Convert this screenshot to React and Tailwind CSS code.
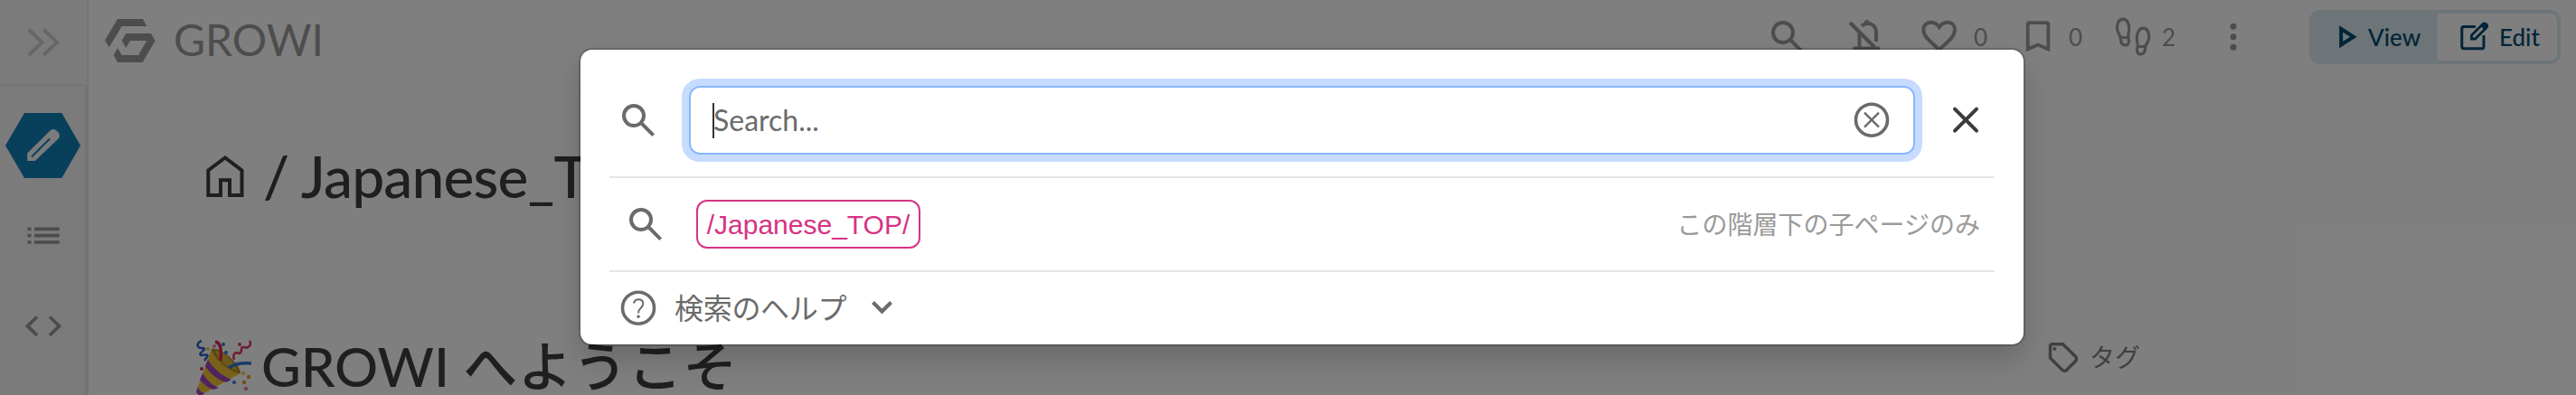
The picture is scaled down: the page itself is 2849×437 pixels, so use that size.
import React from "react";

// Inline drawing whose viewBox is given in canvas units: [x, y, width, height].
function Glyph({ box, className = "", children }) {
  return (
    <svg
      className={`block shrink-0 ${className}`}
      width={box[2]}
      height={box[3]}
      viewBox={box.join(" ")}
      fill="none"
      stroke="currentColor"
      aria-hidden="true"
    >
      {children}
    </svg>
  );
}

function SearchIcon({ className = "" }) {
  return (
    <svg className={`block size-12 shrink-0 ${className}`} viewBox="0 -960 960 960" fill="currentColor" aria-hidden="true">
      <path d="M784-120 532-372q-30 24-69 38t-83 14q-109 0-184.5-75.5T120-580q0-109 75.5-184.5T380-840q109 0 184.5 75.5T640-580q0 44-14 83t-38 69l252 252-56 56ZM380-400q75 0 127.5-52.5T560-580q0-75-52.5-127.5T380-760q-75 0-127.5 52.5T200-580q0 75 52.5 127.5T380-400Z" />
    </svg>
  );
}

function PartyPopper() {
  return (
    <Glyph box={[217, 376, 62, 61]}>
      <path d="M234 386 C242 384 264 401 266 413 L222 437 Q218 438 217.500 432 Z" fill="#f0c435" stroke="none" />
      <path d="M234 386 C246 384 266 404 266 413 C258 414 236 398 234 386Z" fill="#b98a22" stroke="none" />
      <path d="M238 388 C250 389 258 400 262 410 C252 408 241 398 238 388Z" fill="#d8b443" stroke="none" />
      <path d="M230 398 C236 408 246 416 256 420 L250 423 C240 420 231 412 227 405Z" fill="#a344c4" stroke="none" />
      <path d="M224 413 C229 421 236 427 242 429 L236 431 C230 429 225 425 221 420Z" fill="#a344c4" stroke="none" />
      <path d="M218.500 428 C221 433 224 435 227 435 L221 438 L217 434Z" fill="#a344c4" stroke="none" />
      <path d="M238 378 C244 379 245 386 244 399" stroke="#d82a55" strokeWidth="3.500" />
      <path d="M253 407 C260 402 268 401 278 402" stroke="#3577d8" strokeWidth="3.500" />
      <path d="M223 377 C216 380 218 386 225 385 C229 387 219 390 222 393 C227 393 231 391 229 395 L226 399" stroke="#2f62c8" strokeWidth="2.500" />
      <path d="M276 377 C279 382 274 386 270 384 C265 383 269 389 265 391 C260 389 257 391 259 398" stroke="#d83a66" strokeWidth="2.500" />
      <g stroke="none">
        <circle cx="247" cy="381" r="2" fill="#3577d8" />
        <circle cx="250" cy="390" r="2" fill="#3577d8" />
        <circle cx="259" cy="423" r="2" fill="#3577d8" />
        <circle cx="230" cy="386" r="2" fill="#e8cf4a" />
        <circle cx="269" cy="413" r="2" fill="#e8cf4a" />
        <circle cx="237" cy="383" r="2" fill="#e880ac" />
        <circle cx="272" cy="430" r="2.300" fill="#e880ac" />
        <circle cx="223" cy="408" r="2" fill="#d82a55" />
        <circle cx="265" cy="381" r="2" fill="#d84a55" />
        <circle cx="275" cy="417" r="2.200" fill="#e89a35" />
        <circle cx="270" cy="423" r="2.200" fill="#e89a35" />
      </g>
    </Glyph>
  );
}

function Sidebar() {
  return (
    <aside className="flex h-full w-[98px] shrink-0 flex-col bg-[#f6f6f6] text-[#989896]">
      <div className="flex h-[95px] items-center border-r-2 border-b-2 border-[#eaeaea] pl-[28px]">
        <Glyph box={[28, 24, 42, 42]} className="text-[#cfcfcd]">
          <path d="M31.800 30.500 46.500 44.700 31.800 59M48.300 30.500 63 44.700 48.300 59" strokeWidth="4" />
        </Glyph>
      </div>
      <nav className="flex flex-1 flex-col border-r-4 border-[#e6e6e6] pt-[30px]">
        <Glyph box={[6, 125, 84, 72]} className="ml-[6px]">
          <path d="M6 161 27 125H68.300L89 161 68.300 197H27Z" fill="#1080b8" stroke="none" />
          <path d="M30.200 178V169.500L55.500 144.500Q59.500 141.500 63 145Q67.500 148.500 65 153L38.800 178Z" fill="#f6f6f6" stroke="none" />
          <path d="M35 173.500 55 153.500" stroke="#1080b8" strokeWidth="2" />
        </Glyph>
        <Glyph box={[28, 248, 40, 26]} className="mt-[51px] ml-[28px]">
          <path d="M38 253.300H65.700M38 260.700H65.700M38 268H65.700" strokeWidth="3.700" />
          <path d="M30.500 253.300H34.500M30.500 260.700H34.500M30.500 268H34.500" strokeWidth="3.700" />
        </Glyph>
        <Glyph box={[28, 346, 42, 30]} className="mt-[72px] ml-[28px]">
          <path d="M41 350.500 30.500 360.700 41 371M55 350.500 65.500 360.700 55 371" strokeWidth="3.800" />
        </Glyph>
      </nav>
    </aside>
  );
}

function Brand() {
  return (
    <div className="flex h-[90px] items-center text-[#9a9a9a]">
      <Glyph box={[116, 21, 56, 48]} className="ml-[18px]">
        <path
          d="M116 44.700 130 21H158L162.300 29H134.700L120.700 52.300ZM134.700 45 139.300 37H167L171.700 45 157.700 69H130L125.700 61 130 53.300 134.700 61H153L162.300 45H144L139.300 53Z"
          fill="currentColor"
          stroke="none"
        />
      </Glyph>
      <span className="ml-[20px] pb-[2px] text-[48px] leading-[58px]">GROWI</span>
    </div>
  );
}

function HeaderActions() {
  return (
    <div className="flex h-[82px] items-center text-[26px] text-[#9a9a9a]">
      <SearchIcon />
      <Glyph box={[2040, 17, 48, 48]} className="ml-[39px]">
        <path d="M2046 25 2079 58" strokeWidth="4" />
        <path d="M2056.500 36V52M2049.500 53.500H2079M2059 28.500Q2064 25 2069 26.500Q2075 29 2075 36V46" strokeWidth="4" />
        <circle cx="2064.700" cy="25" r="3" fill="currentColor" stroke="none" />
      </Glyph>
      <Glyph box={[2121, 17, 48, 48]} className="ml-[33px]">
        <path d="M2144.700 55 C2134 45 2127.300 40 2127.300 33 C2127.300 28 2131 24.700 2135.500 24.700 C2139.500 24.700 2142.500 26.500 2144.700 30 C2147 26.500 2150 24.700 2154 24.700 C2158.500 24.700 2162 28 2162 33 C2162 40 2155.500 45 2144.700 55Z" strokeWidth="4" />
      </Glyph>
      <span className="ml-[14px] w-4 leading-8">0</span>
      <Glyph box={[2230, 17, 48, 48]} className="ml-[31px]">
        <path d="M2242.700 54.300V27Q2242.700 25.200 2244.500 25.200H2263.500Q2265.300 25.200 2265.300 27V54.300L2254 49.500Z" strokeWidth="3.800" />
      </Glyph>
      <span className="ml-[10px] w-4 leading-8">0</span>
      <Glyph box={[2336, 17, 46, 48]} className="ml-[32px]">
        <path d="M2348 21.200 C2343 21.200 2341 27 2341.500 32 C2342 37 2345 38 2345.500 43 C2345.500 47 2347 50 2350.500 50 C2354 50 2355.500 46 2354 42.500 C2353 40 2354.500 37 2354.700 32 C2355 27 2353 21.200 2348 21.200Z M2345 41.500H2354" strokeWidth="3.200" />
        <path d="M2370.500 31.200 C2375.500 31.200 2377 37 2376.700 42 C2376.500 47 2373 48 2372.500 53 C2372.500 57 2371 60 2367.500 60 C2364 60 2362.500 56 2364 52.500 C2365 50 2363.500 47 2363.300 42 C2363 37 2365.500 31.200 2370.500 31.200Z M2364 51.500H2373" strokeWidth="3.200" />
      </Glyph>
      <span className="ml-[9px] w-4 leading-8">2</span>
      <Glyph box={[2464, 17, 12, 48]} className="ml-[57px]">
        <g fill="currentColor" stroke="none">
          <circle cx="2470" cy="29.200" r="3.500" />
          <circle cx="2470" cy="40.700" r="3.500" />
          <circle cx="2470" cy="52.200" r="3.500" />
        </g>
      </Glyph>
      <div className="ml-[78px] flex h-[60px] w-[278px] overflow-hidden rounded-xl border-4 border-[#dbeaf1] font-medium text-[#024a70]">
        <div className="flex w-[138px] items-center bg-[#dbeaf1]">
          <Glyph box={[2586, 26, 24, 30]} className="ml-[28px]">
            <path d="M2589.200 32V49.500L2603 40.700Z" strokeWidth="4" />
          </Glyph>
          <span className="ml-[9px] leading-8">View</span>
        </div>
        <div className="flex flex-1 items-center bg-white">
          <Glyph box={[2719, 22, 36, 36]} className="ml-[23px]">
            <path d="M2738 28.500H2725Q2722.800 28.500 2722.800 30.500V50.500Q2722.800 52.700 2725 52.700H2745Q2747 52.700 2747 50.500V38" strokeWidth="3" />
            <path d="M2733.500 42V38L2746 25.500Q2748 24 2750 26Q2751.500 28 2750 29.500L2737.500 42Z" strokeWidth="2.800" />
            <path d="M2743.500 28 2747.500 24Q2749 23.500 2751 25.500Q2752.500 27 2751 29L2747.500 32Z" fill="currentColor" stroke="none" />
          </Glyph>
          <span className="ml-[9px] leading-8">Edit</span>
        </div>
      </div>
    </div>
  );
}

function Page() {
  return (
    <div className="flex h-full bg-white">
      <Sidebar />
      <main className="flex flex-1 flex-col">
        <header className="flex items-start justify-between pr-[17px]">
          <Brand />
          <HeaderActions />
        </header>
        <h1 className="mt-[60px] flex h-[90px] items-center text-[64px] leading-[88px] font-medium tracking-[-0.8px] text-[#403e3d]">
          <Glyph box={[226, 170, 46, 50]} className="ml-[128px]">
            <path d="M230.300 216V188.500L249 174.500 267.500 188.500V216H254V199.300H244V216Z" strokeWidth="4" />
          </Glyph>
          <span className="ml-[19px] whitespace-pre">/ Japanese_TOP</span>
        </h1>
        <div className="mt-[120px] flex h-[77px] items-start">
          <div className="flex h-[77px] w-[2149px] items-start text-[60px] leading-[62px] font-medium text-[#403e3d]">
            <div className="mt-[16px] ml-[119px]">
              <PartyPopper />
            </div>
            <h2 className="mt-[14px] ml-[10px] whitespace-pre">
              GROWI <span className="tracking-[0.8px]">へようこそ</span>
            </h2>
          </div>
          <div className="flex items-center pt-[14px] text-[28px] leading-[42px] text-[#7e7e7c]">
            <Glyph box={[2263, 375, 38, 38]} className="ml-[16px]">
              <path d="M2267.500 382Q2267.500 379.700 2270 379.700H2281.500L2295.500 393.500Q2297.500 396 2295.500 398.500L2285.500 408.500Q2283.500 410.500 2281 408.500L2267.500 395Z" strokeWidth="3.400" />
              <circle cx="2272.300" cy="385" r="2" fill="currentColor" stroke="none" />
            </Glyph>
            <span className="ml-[10px]">タグ</span>
          </div>
        </div>
      </main>
    </div>
  );
}

function SearchModal() {
  return (
    <div
      role="dialog"
      className="absolute top-[55px] left-[642px] flex h-[326px] w-[1596px] flex-col rounded-[13px] bg-white px-8 text-[#6b6b6a] shadow-[0_0_0_2px_rgba(0,0,0,0.175),0_16px_32px_rgba(0,0,0,0.18)]"
    >
      <div className="flex h-[142px] items-start border-b-2 border-[#e6e6e6] pt-10">
        <SearchIcon className="mt-[14px] ml-[8px]" />
        <div className="ml-[32px] flex h-[76px] w-[1356px] items-center rounded-xl border-2 border-[#86b7fe] text-[32px] shadow-[0_0_0_8px_#c7dbfe]">
          <span className="ml-[24px] h-[39px] w-[2px] bg-[#333333]" />
          <span className="-ml-px flex-1 leading-[48px]">Search...</span>
          <Glyph box={[2050, 113, 40, 40]} className="mr-[26px]">
            <circle cx="2070" cy="132.700" r="17.500" strokeWidth="3.600" />
            <path d="M2062 124.700 2078 140.700M2078 124.700 2062 140.700" strokeWidth="2.400" />
          </Glyph>
        </div>
        <Glyph box={[2158, 117, 32, 32]} className="mt-[22px] ml-[40px] text-[#3c3b3a]">
          <path d="M2162 120.700 2186 144.700M2186 120.700 2162 144.700" strokeWidth="4" strokeLinecap="round" />
        </Glyph>
      </div>
      <div className="flex h-[104px] items-center border-b-2 border-[#e6e6e6]">
        <SearchIcon className="ml-[16px]" />
        <code className="ml-[32px] flex h-[54px] w-[248px] items-center justify-center rounded-xl border-2 border-[#d63384] font-['Liberation_Sans',sans-serif] text-[30px] text-[#d63384]">
          /Japanese_TOP/
        </code>
        <span className="mr-[16px] ml-auto text-[28px] text-[#9a9a99]">この階層下の子ページのみ</span>
      </div>
      <div className="flex h-[80px] items-center text-[32px]">
        <Glyph box={[686, 321, 40, 40]} className="ml-[12px]">
          <circle cx="706" cy="340.700" r="17.500" strokeWidth="3.600" />
          <path d="M701 335.500Q702 331.300 706 331.300Q711.300 331.300 711.300 336Q711.300 338.500 708.500 341Q706 343 706 346.500" strokeWidth="2" />
          <circle cx="706" cy="350.300" r="1.700" fill="currentColor" stroke="none" />
        </Glyph>
        <span className="ml-[20px] leading-[48px] tracking-[-0.3px]">検索のヘルプ</span>
        <Glyph box={[962, 331, 28, 20]} className="ml-[26px]">
          <path d="M965.500 334.500 975.500 344.500 985.500 334.500" strokeWidth="4.200" />
        </Glyph>
      </div>
    </div>
  );
}

export default function App() {
  return (
    <div className="relative h-[437px] w-[2849px] overflow-hidden font-['Lato','Noto_Sans_CJK_JP',sans-serif]">
      <Page />
      <div className="absolute inset-0 bg-black/50" />
      <SearchModal />
    </div>
  );
}
